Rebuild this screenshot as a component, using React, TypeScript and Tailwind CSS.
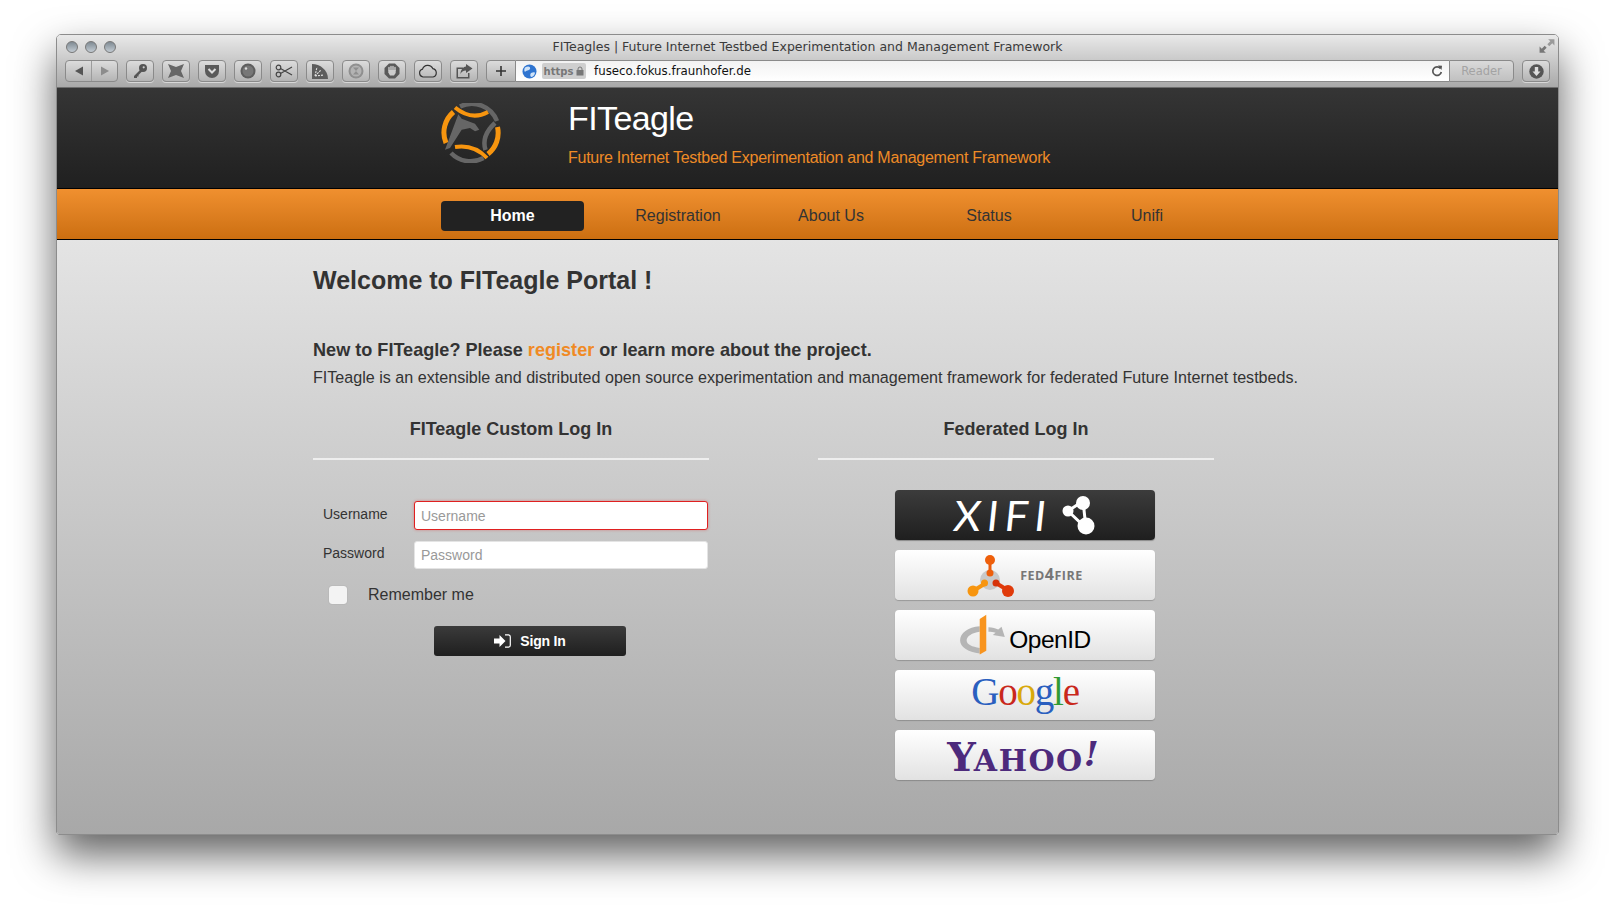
import type { ReactNode } from "react";

const sans = "font-['Liberation_Sans',Arial,sans-serif]";

function ToolButton({ children }: { children: ReactNode }) {
  return (
    <div className="flex h-[22px] w-[28px] items-center justify-center rounded-[4px] border border-[#8a8a8a] bg-gradient-to-b from-[#dcdcdc] to-[#b4b4b4] shadow-[0_1px_0_rgba(255,255,255,0.5)]">
      {children}
    </div>
  );
}

function LoginButton({ children, dark }: { children: ReactNode; dark?: boolean }) {
  return (
    <div
      className={
        dark
          ? "flex h-[50px] w-[260px] items-center justify-center rounded-[4px] bg-gradient-to-b from-[#3c3c3c] to-[#1f1f1f] shadow-[0_1px_1px_rgba(0,0,0,0.3)]"
          : "flex h-[50px] w-[260px] items-center justify-center rounded-[4px] bg-gradient-to-b from-[#ffffff] to-[#e2e2e2] shadow-[0_1px_1px_rgba(0,0,0,0.2)]"
      }
    >
      {children}
    </div>
  );
}

function Logo() {
  return (
    <svg width="60" height="60" viewBox="0 0 60 60" fill="none">
      <path d="M19 3.5A27 27 0 0 1 56 18" stroke="#666" strokeWidth="4.5" />
      <path d="M14 4.5Q30.5 18 47 9" stroke="#f7950f" strokeWidth="4" />
      <path d="M12.5 9A27 27 0 0 0 5 40" stroke="#f7950f" strokeWidth="5" />
      <path d="M54 20Q40 33 44.5 47" stroke="#666" strokeWidth="4.5" />
      <path d="M56.5 24A27 27 0 0 1 47 51" stroke="#f7950f" strokeWidth="5" />
      <path d="M14 44Q33 41 46 55" stroke="#f7950f" strokeWidth="4" />
      <path d="M10 50A27 27 0 0 0 42.5 55" stroke="#666" strokeWidth="4.5" />
      <path d="M4 46.7L17.3 11.3L20.7 15.7L34 20.7L38.3 26.7L34 28.3L29 25L20.7 26.7L9 45Z" fill="#666" />
    </svg>
  );
}

function Fed4FireMark() {
  return (
    <svg width="48" height="44" viewBox="0 0 48 44">
      <circle cx="23" cy="27" r="10" fill="#c9c9c9" />
      <path d="M23 5V20" stroke="#e85b0c" strokeWidth="3" />
      <path d="M6 38L19 30" stroke="#f7950f" strokeWidth="4" />
      <path d="M42 38L29 30" stroke="#e03a0a" strokeWidth="4" />
      <circle cx="23" cy="7" r="5" fill="#ee5f0b" />
      <circle cx="23" cy="20" r="3.5" fill="#ee5f0b" />
      <circle cx="6" cy="38" r="5.5" fill="#f7950f" />
      <circle cx="17.5" cy="30" r="3.5" fill="#f7950f" />
      <circle cx="41" cy="38" r="6" fill="#e03a0a" />
      <circle cx="29" cy="30" r="3.5" fill="#d6330a" />
    </svg>
  );
}

export default function App() {
  return (
    <div className={`h-[914px] w-[1615px] overflow-hidden bg-white pl-[56px] pt-[34px] ${sans}`}>
      <div className="flex h-[801px] w-[1503px] flex-col overflow-hidden rounded-t-[5px] rounded-b-[3px] border border-[#8c8c8c] shadow-[0_20px_42px_rgba(0,0,0,0.62)]">
        {/* Safari chrome */}
        <div className="h-[53px] shrink-0 border-b border-[#6e6e6e] bg-gradient-to-b from-[#e9e9e9] to-[#a9a9a9]">
          <div className="relative flex h-[24px] items-center pl-[9px]">
            <div className="flex gap-[7px]">
              <span className="h-[12px] w-[12px] rounded-full border border-[#777] bg-gradient-to-b from-[#7f8a93] to-[#c3ccd3]" />
              <span className="h-[12px] w-[12px] rounded-full border border-[#777] bg-gradient-to-b from-[#7f8a93] to-[#c3ccd3]" />
              <span className="h-[12px] w-[12px] rounded-full border border-[#777] bg-gradient-to-b from-[#7f8a93] to-[#c3ccd3]" />
            </div>
            <div className="flex-1 pr-[59px] text-center font-['DejaVu_Sans',sans-serif] text-[12.5px] text-[#3a3a3a]">
              FITeagles | Future Internet Testbed Experimentation and Management Framework
            </div>
            <svg className="absolute right-[3px] top-[3px]" width="16" height="16" viewBox="0 0 14 14" fill="#777">
              <path d="M8 1H13.5V6.5L11.6 4.6L9 7.2L7.3 5.5L9.9 2.9Z" fill="#9a9a9a" />
              <path d="M6 13H.5V7.5L2.4 9.4L5 6.8L6.7 8.5L4.1 11.1Z" />
            </svg>
          </div>
          <div className="mt-[1px] flex h-[22px] items-center pl-[8px]">
            <div className="mr-[8px] flex h-[22px] w-[53px] items-center rounded-[4px] border border-[#8a8a8a] bg-gradient-to-b from-[#dcdcdc] to-[#b4b4b4]">
              <div className="flex h-full w-[26px] items-center justify-center border-r border-[#9c9c9c]">
                <svg width="10" height="10" viewBox="0 0 10 10"><path d="M1 5L9 .5V9.5Z" fill="#555" /></svg>
              </div>
              <div className="flex flex-1 items-center justify-center">
                <svg width="10" height="10" viewBox="0 0 10 10"><path d="M9 5L1 .5V9.5Z" fill="#8c8c8c" /></svg>
              </div>
            </div>
            <div className="flex gap-[8px]">
              <ToolButton>
                <svg width="16" height="16" viewBox="0 0 16 16">
                  <circle cx="11" cy="5" r="4" fill="#555" />
                  <circle cx="11.7" cy="4.3" r="1.1" fill="#ccc" />
                  <path d="M9 6L2 13V15H5V13.5H6.5V12L10.5 8Z" fill="#555" />
                </svg>
              </ToolButton>
              <ToolButton>
                <svg width="18" height="16" viewBox="0 0 18 16">
                  <path d="M1 1L9 4L17 1L14 8L17 15L9 12L1 15L4 8Z" fill="#666" />
                </svg>
              </ToolButton>
              <ToolButton>
                <svg width="16" height="15" viewBox="0 0 16 15">
                  <path d="M1 1H15V7A7 7 0 0 1 1 7Z" fill="#5a5a5a" />
                  <path d="M4.5 5L8 8.5L11.5 5" stroke="#ddd" strokeWidth="2" fill="none" />
                </svg>
              </ToolButton>
              <ToolButton>
                <svg width="16" height="16" viewBox="0 0 16 16">
                  <circle cx="8" cy="8" r="7.5" fill="#5e5e5e" />
                  <circle cx="8" cy="8" r="5.5" fill="#777" />
                  <circle cx="6" cy="5.5" r="1.2" fill="#ddd" />
                </svg>
              </ToolButton>
              <ToolButton>
                <svg width="18" height="14" viewBox="0 0 18 14" fill="none" stroke="#444" strokeWidth="1.2">
                  <circle cx="3.5" cy="3.5" r="2.3" />
                  <circle cx="3.5" cy="10.5" r="2.3" />
                  <path d="M5.5 4.5L17 11M5.5 9.5L17 3" />
                </svg>
              </ToolButton>
              <ToolButton>
                <svg width="18" height="17" viewBox="0 0 18 17">
                  <path d="M1 1C9 1 17 7 17 16H1Z" fill="#5c5c5c" />
                  <path d="M4 13L6 4M4 13L10 7M4 13L13 12" stroke="#ddd" strokeWidth="1.1" strokeDasharray="2 1" />
                </svg>
              </ToolButton>
              <ToolButton>
                <svg width="16" height="16" viewBox="0 0 16 16">
                  <circle cx="8" cy="8" r="7.5" fill="#8f8f8f" />
                  <circle cx="8" cy="8" r="5.5" fill="#b3b3b3" />
                  <path d="M5 4.5H11L5 11.5H11Z" fill="#8f8f8f" />
                </svg>
              </ToolButton>
              <ToolButton>
                <svg width="16" height="16" viewBox="0 0 16 16">
                  <path d="M5 .5H11L15.5 5V11L11 15.5H5L.5 11V5Z" fill="#5a5a5a" />
                  <path d="M5 7V4.5M7 7V3.5M9 7V3.5M11 7.5V4.5" stroke="#ccc" strokeWidth="1.4" strokeLinecap="round" />
                  <path d="M4.3 7H11.7V10L10 12.5H6L4.3 9.5Z" fill="#ccc" />
                </svg>
              </ToolButton>
              <ToolButton>
                <svg width="20" height="14" viewBox="0 0 20 14" fill="none" stroke="#333" strokeWidth="1.2">
                  <path d="M5 13A4 4 0 0 1 4.5 5.2A5.5 5.5 0 0 1 14.8 4.6A4.3 4.3 0 0 1 15 13Z" />
                </svg>
              </ToolButton>
              <ToolButton>
                <svg width="18" height="15" viewBox="0 0 18 15">
                  <path d="M1.5 3.5H8V5H3V13H13V9H14.5V14.5H1.5Z" fill="#555" />
                  <path d="M11 0L17.5 4.5L11 9V6.5C8 6.5 6.5 8 5.5 10C5.5 6 8 3 11 2.5Z" fill="#555" />
                </svg>
              </ToolButton>
            </div>
            <div className="ml-[8px] flex h-[22px] w-[30px] items-center justify-center rounded-l-[4px] border border-[#8a8a8a] bg-gradient-to-b from-[#dcdcdc] to-[#b4b4b4]">
              <svg width="12" height="12" viewBox="0 0 12 12"><path d="M6 1V11M1 6H11" stroke="#333" strokeWidth="1.6" /></svg>
            </div>
            <div className="flex h-[22px] w-[933px] items-center border-y border-[#8a8a8a] bg-gradient-to-b from-[#f2f2f2] to-[#ffffff] pl-[6px] pr-[6px]">
              <svg width="15" height="15" viewBox="0 0 15 15">
                <circle cx="7.5" cy="7.5" r="7" fill="#2f74d0" />
                <path d="M3 3.5C6 1.5 9 2.5 8 5C7 7 4 6 3 8C2 7 2 5 3 3.5ZM9 9C11 8 13 8 13 9C12.5 11.5 10.5 13 9 13C8 12 8 10 9 9Z" fill="#cfe3f8" />
              </svg>
              <div className="ml-[5px] flex h-[16px] w-[44px] items-center justify-center gap-[3px] rounded-[2px] bg-[#cfcfcf] font-['DejaVu_Sans',sans-serif] text-[10px] font-bold text-[#777]">
                https
                <svg width="8" height="10" viewBox="0 0 8 10">
                  <path d="M2 4V3A2 2 0 0 1 6 3V4" stroke="#777" fill="none" />
                  <rect x=".5" y="4" width="7" height="5.5" fill="#777" />
                </svg>
              </div>
              <div className="ml-[8px] mt-[1px] flex-1 font-['DejaVu_Sans',sans-serif] text-[11.8px] text-[#111]">fuseco.fokus.fraunhofer.de</div>
              <svg width="12" height="12" viewBox="0 0 12 12" fill="none">
                <path d="M9.5 3.5A4.3 4.3 0 1 0 10.3 7" stroke="#555" strokeWidth="1.7" />
                <path d="M7 .5L11 .8L10.5 5Z" fill="#555" />
              </svg>
            </div>
            <div className="flex h-[22px] w-[65px] items-center justify-center rounded-r-[4px] border border-[#8a8a8a] bg-gradient-to-b from-[#dadada] to-[#c0c0c0] pt-[1px] font-['DejaVu_Sans',sans-serif] text-[11.5px] text-[#a3a3a3]">
              Reader
            </div>
            <div className="ml-[8px]">
              <ToolButton>
                <svg width="15" height="15" viewBox="0 0 15 15">
                  <circle cx="7.5" cy="7.5" r="7.2" fill="#555" />
                  <path d="M5.8 3H9.2V7.5H11.5L7.5 12L3.5 7.5H5.8Z" fill="#ddd" />
                </svg>
              </ToolButton>
            </div>
          </div>
        </div>

        {/* Page header */}
        <div className="flex h-[101px] shrink-0 border-b border-black bg-gradient-to-b from-[#353535] to-[#202020] pl-[384px]">
          <div className="mt-[15px] h-[60px] w-[127px] shrink-0">
            <Logo />
          </div>
          <div className="flex flex-col">
            <div className="mt-[10px] text-[34px] leading-[40px] tracking-[-0.6px] text-white">FITeagle</div>
            <div className="mt-[9px] text-[16px] leading-[22px] tracking-[-0.26px] text-[#ee8b26]">
              Future Internet Testbed Experimentation and Management Framework
            </div>
          </div>
        </div>

        {/* Nav */}
        <div className="flex h-[51px] shrink-0 items-center border-b border-black bg-gradient-to-b from-[#f0902f] to-[#cc6f10] pl-[384px] pt-[4px] text-[16px] text-[#333]">
          <div className="flex h-[30px] w-[143px] items-center justify-center rounded-[4px] bg-[#222] font-bold text-white">Home</div>
          <div className="ml-[10px] w-[168px] text-center">Registration</div>
          <div className="w-[138px] text-center">About Us</div>
          <div className="w-[178px] text-center">Status</div>
          <div className="w-[138px] text-center">Unifi</div>
        </div>

        {/* Page content */}
        <div className="flex-1 bg-gradient-to-b from-[#e4e4e4] to-[#a8a8a8] pl-[256px] pt-[24px] text-[#333]">
          <h1 className="text-[25px] font-bold leading-[32px]">Welcome to FITeagle Portal !</h1>
          <p className="mt-[42px] text-[18.1px] font-bold leading-[24px]">
            New to FITeagle? Please <span className="text-[#f08a24]">register</span> or learn more about the project.
          </p>
          <p className="mt-[3px] text-[16.13px] leading-[24px]">
            FITeagle is an extensible and distributed open source experimentation and management framework for federated Future Internet testbeds.
          </p>

          <div className="mt-[28px] flex gap-[109px]">
            <div className="w-[396px]">
              <div className="border-b-2 border-[#eeeeee] pb-[17px] text-center text-[18px] font-bold leading-[24px]">FITeagle Custom Log In</div>
              <div className="mt-[41px] flex items-start pl-[10px]">
                <label className="w-[91px] pt-[3px] text-[14px] leading-[20px]">Username</label>
                <input
                  placeholder="Username"
                  className="h-[29px] w-[294px] rounded-[3px] border border-[#e02020] bg-white px-[6px] text-[14px] shadow-[0_0_3px_rgba(224,32,32,0.4)] placeholder:text-[#999] outline-none"
                />
              </div>
              <div className="mt-[11px] flex items-start pl-[10px]">
                <label className="w-[91px] pt-[2px] text-[14px] leading-[20px]">Password</label>
                <input
                  placeholder="Password"
                  className="h-[28px] w-[294px] rounded-[3px] border border-[#e4e4e4] bg-white px-[6px] text-[14px] placeholder:text-[#999] outline-none"
                />
              </div>
              <div className="ml-[16px] mt-[17px] flex items-center">
                <span className="h-[18px] w-[18px] rounded-[3px] bg-[#f3f3f3] shadow-[0_0_1px_rgba(0,0,0,0.3)]" />
                <span className="ml-[21px] text-[16px] leading-[18px]">Remember me</span>
              </div>
              <button className="ml-[121px] mt-[22px] flex h-[30px] w-[192px] items-center justify-center gap-[9px] rounded-[3px] bg-gradient-to-b from-[#3b3b3b] to-[#1f1f1f] text-[14px] font-bold tracking-[-0.2px] text-white">
                <svg width="17" height="14" viewBox="0 0 17 14" fill="white">
                  <path d="M0 4.5H5.5V1L11.5 7L5.5 13V9.5H0Z" />
                  <path d="M11 .8H14.5A2 2 0 0 1 16.3 2.8V11.2A2 2 0 0 1 14.5 13.2H11" stroke="white" strokeWidth="1.2" fill="none" />
                </svg>
                Sign In
              </button>
            </div>

            <div className="w-[396px]">
              <div className="border-b-2 border-[#eeeeee] pb-[17px] text-center text-[18px] font-bold leading-[24px]">Federated Log In</div>
              <div className="ml-[77px] mt-[30px] flex flex-col gap-[10px]">
                <LoginButton dark>
                  <span className="inline-block -skew-x-6 font-['Lato',sans-serif] text-[42px] leading-none tracking-[6px] text-white">XIFI</span>
                  <svg className="ml-[9px]" width="34" height="42" viewBox="0 0 34 42">
                    <path d="M21 7L6 17L24 34Z" stroke="white" strokeWidth="3" fill="none" />
                    <circle cx="21" cy="9" r="7" fill="white" />
                    <circle cx="6" cy="17" r="5.5" fill="white" />
                    <circle cx="24" cy="32" r="8.5" fill="white" />
                  </svg>
                </LoginButton>
                <LoginButton>
                  <Fed4FireMark />
                  <span className="mb-[2px] ml-[5px] font-['Open_Sans',sans-serif] text-[12.5px] font-bold tracking-[0.5px] text-[#777]">
                    FED<span className="text-[16px]">4</span>FIRE
                  </span>
                </LoginButton>
                <LoginButton>
                  <svg className="mt-[2px]" width="48" height="46" viewBox="0 0 44 42">
                    <path d="M19 12C8 13 1 18 1 25C1 31 8 36 19 37V32C12 31 7 29 7 25C7 21 12 18 19 17Z" fill="#b5b5b5" />
                    <path d="M19 5.5L25 1.5V34.5L19 38Z" fill="#f8941e" />
                    <path d="M27 13C31 13 33.5 14 36 15L39 12.5L42 22L31 20L33.5 18C31.5 17.3 29 17 27 17Z" fill="#b5b5b5" />
                  </svg>
                  <span className="ml-[2px] mt-[10px] text-[24.5px] leading-none tracking-[-0.5px] text-black">OpenID</span>
                </LoginButton>
                <LoginButton>
                  <span className="mb-[8px] font-['Liberation_Serif',serif] text-[39px] leading-none tracking-[-1.2px]">
                    <span className="text-[#2a5fbf]">G</span>
                    <span className="text-[#c9281c]">o</span>
                    <span className="text-[#d9a90c]">o</span>
                    <span className="text-[#2a5fbf]">g</span>
                    <span className="text-[#2f9a34]">l</span>
                    <span className="text-[#c9281c]">e</span>
                  </span>
                </LoginButton>
                <LoginButton>
                  <span className="mr-[4px] mt-[3px] flex items-end font-['DejaVu_Serif',serif] font-bold leading-none text-[#4d2a7c]">
                    <span className="text-[40px]">Y</span>
                    <span className="mb-[1px] ml-[-2px] text-[30px] tracking-[1.5px]">AHOO</span>
                    <span className="mb-[6px] text-[34px] italic">!</span>
                  </span>
                </LoginButton>
              </div>
            </div>
          </div>
        </div>
      </div>
    </div>
  );
}
